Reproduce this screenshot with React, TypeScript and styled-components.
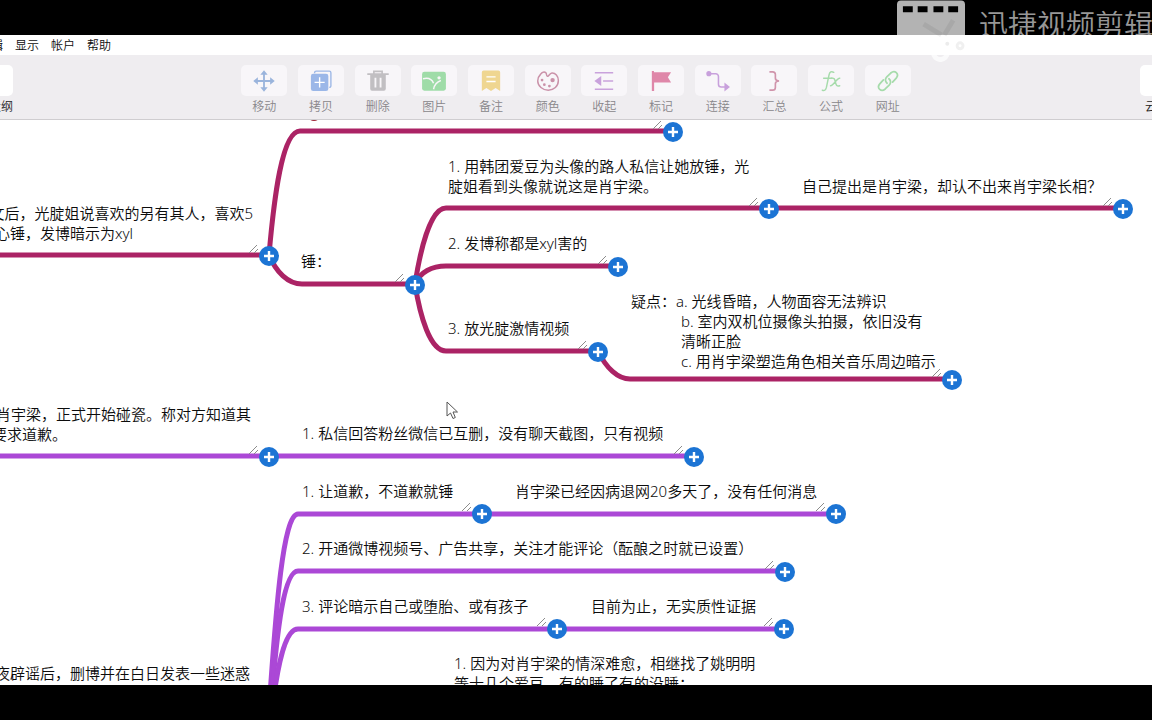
import React from "react";
import styled, { createGlobalStyle } from "styled-components";

const Global = createGlobalStyle`
  * { box-sizing: border-box; }
  body { margin: 0; background: #000; }
  button { font: inherit; border: 0; padding: 0; background: none; color: inherit; cursor: pointer; }
`;

const Page = styled.div`
  position: relative;
  display: flex;
  flex-direction: column;
  height: 100vh;
  padding: 35px 0;
  overflow: hidden;
  background: #000;
  color: #0c0c0c;
  font-family: "Noto Sans", "Noto Sans CJK SC", sans-serif;
  font-weight: 350;
`;

const MenuBar = styled.nav`
  display: flex;
  flex: none;
  gap: 12px;
  height: 20px;
  background: #fff;
  font-size: 12px;
`;

const MenuItem = styled.button`
  flex: none;
  line-height: 22px;

  &:first-child {
    margin-left: -21px;
  }
`;

const ToolBar = styled.header`
  display: grid;
  grid-template-columns: 1fr 680px 1fr;
  flex: none;
  height: 65px;
  padding-top: 10px;
  background: #efedf0;
  border-bottom: 1px solid #cfcdd0;
`;

const ToolGroup = styled.div<{ $side?: "left" | "right" }>`
  display: flex;
  justify-content: ${(p) => (p.$side === "right" ? "flex-end" : "flex-start")};
  margin-left: ${(p) => (p.$side === "left" ? "-33px" : "0")};
  margin-right: ${(p) => (p.$side === "right" ? "-34px" : "0")};
`;

const Tool = styled.button<{ $fill?: boolean; $active?: boolean; $align?: string }>`
  display: flex;
  flex: ${(p) => (p.$fill ? "1 1 0" : "none")};
  flex-direction: column;
  align-items: ${(p) => p.$align ?? "center"};
  height: 54px;
  color: ${(p) => (p.$active ? "#222" : "#88868a")};
  font-size: 12px;
  line-height: 22px;
`;

const ToolFace = styled.span<{ $active?: boolean }>`
  display: flex;
  flex: none;
  align-items: center;
  justify-content: center;
  width: 46px;
  height: 31px;
  border-radius: 5px;
  background: ${(p) => (p.$active ? "#fff" : "#f8f6f9")};
`;

const ToolLabel = styled.span<{ $inset?: boolean }>`
  padding-left: ${(p) => (p.$inset ? "5px" : "0")};
`;

const Canvas = styled.main`
  position: relative;
  flex: 1;
  overflow: hidden;
  background: #fff;
`;

const Links = styled.svg`
  position: absolute;
  top: 0;
  left: 0;
  overflow: visible;
`;

const Topic = styled.div<{ $x: number; $y: number; $fromRight?: boolean }>`
  position: absolute;
  top: ${(p) => p.$y}px;
  left: ${(p) => p.$x}px;
  transform: ${(p) => (p.$fromRight ? "translateX(-100%)" : "none")};
  font-size: 15px;
  line-height: 20px;
  white-space: pre;
`;

const AddButton = styled.button<{ $x: number; $y: number }>`
  position: absolute;
  top: ${(p) => p.$y - 10}px;
  left: ${(p) => p.$x - 10}px;
  width: 20px;
  height: 20px;
  border-radius: 50%;
  background: #1c74d4;
`;

const Pointer = styled.svg`
  position: absolute;
  top: 281px;
  left: 446px;
`;

const Watermark = styled.div`
  position: absolute;
  top: 0;
  right: -1px;
  display: flex;
  width: 256px;
  gap: 13px;
  overflow: hidden;
  color: rgba(255, 255, 255, 0.6);
  font-size: 29px;
  line-height: 50px;
  white-space: nowrap;
  pointer-events: none;
`;

const icons: Record<string, React.ReactNode> = {
  移动: (
    <g fill="#9ab4dc" stroke="#9ab4dc" strokeWidth="2">
      <path d="M12 3v18M3 12h18" />
      <path stroke="none" d="M12 .3l4 5H8zM12 23.700l4-5H8zM.3 12l5-4v8zM23.700 12l-5-4v8z" />
    </g>
  ),
  拷贝: (
    <g fill="none">
      <path d="M5 3.500V3a1.800 1.800 0 0 1 1.800-1.800H21A1.800 1.800 0 0 1 22.800 3v14.500A1.800 1.800 0 0 1 21 19" stroke="#9db8e6" strokeWidth="1.500" />
      <rect x="1" y="4" width="19" height="19" rx="2.500" fill="#9bb7e8" />
      <path d="M10.500 8v11M5 13.500H16" stroke="#fff" strokeWidth="1.500" />
    </g>
  ),
  删除: (
    <g fill="none" stroke="#c1bfc2" strokeWidth="1.800">
      <path d="M.3 4.500h23.400M7.500 4V1.500h9V4" />
      <path d="M3.500 5h17v15.500a2 2 0 0 1-2 2h-13a2 2 0 0 1-2-2z" fill="#c1bfc2" stroke="none" />
      <path d="M9.200 8.500v10.500M14.800 8.500v10.500" stroke="#f8f6f9" strokeWidth="2" />
    </g>
  ),
  图片: (
    <g fill="none">
      <rect x="-1" y="2" width="26" height="20.500" rx="2.500" fill="#9fdca8" />
      <path d="M0 9.500c6-1.500 10 1 11.500 5M11.500 21c1-5 3.500-8 8-9.500" stroke="#f8f6f9" strokeWidth="1.600" />
      <circle cx="17.500" cy="8.500" r="1.800" fill="#f8f6f9" />
    </g>
  ),
  备注: (
    <g>
      <path d="M2 2.500a2 2 0 0 1 2-2h16a2 2 0 0 1 2 2V23l-5-3.500-5 3.500-5-3.500L2 23z" fill="#efd691" />
      <path d="M7 7.500h10M7 12.500h10" stroke="#fff" strokeWidth="1.600" />
    </g>
  ),
  颜色: (
    <g fill="none" stroke="#ca92a9" strokeWidth="1.600">
      <path d="M4 4.500C5.500 2.500 8 1.700 9.500 2.800c1.500 1.200.2 3.400 1.800 4 1.700.6 2.200-3.300 5-3.500 3.700-.2 7 3.500 7 8.200 0 6.200-5 10.500-11 10.500S.8 17.500.8 12c0-3 1.200-5.500 3.200-7.500z" />
      <g fill="#ca92a9" stroke="none">
        <circle cx="5.500" cy="11" r="1.500" />
        <circle cx="8" cy="16" r="1.500" />
        <circle cx="13.500" cy="17.500" r="1.500" />
        <circle cx="17" cy="11" r="2.400" />
      </g>
    </g>
  ),
  收起: (
    <g stroke="#c9a2dc" strokeWidth="1.600">
      <path d="M2 3h20M11 12h11M2 21h20" />
      <path d="M9 6.500v11L1.500 12z" fill="#c9a2dc" stroke="none" />
    </g>
  ),
  标记: <path d="M2 1h2.300v1.500H23L19.500 8 23 13.500H4.500V23H2z" fill="#df87a9" />,
  连接: (
    <g fill="none" stroke="#c8a0dc" strokeWidth="1.700">
      <path d="M2 4h7.500a3 3 0 0 1 3 3v8.500a3 3 0 0 0 3 3H20" />
      <circle cx="2" cy="4" r="2.800" fill="#c8a0dc" stroke="none" />
      <path d="M19 13.500l6 5-6 5z" fill="#c8a0dc" stroke="none" />
    </g>
  ),
  汇总: (
    <path d="M7 2h3.500a3 3 0 0 1 3 3v4c0 1.800 1 2.800 4 3-3 .2-4 1.200-4 3v4a3 3 0 0 1-3 3H7" fill="none" stroke="#d094ab" strokeWidth="1.800" />
  ),
  公式: (
    <g fill="none" stroke="#a6dbab" strokeWidth="1.600" strokeLinecap="round">
      <path d="M15 2.500c-2.500-1.500-4.500-.5-5.200 3L7 19c-.7 3-2.500 4.200-4.500 3M4 9h9" />
      <path d="M12.500 9c3-.7 3.500 1 4.300 4.200.8 3.300 1.700 5 4.700 4M21.500 9c-3-.5-7 8.500-10 8.200" />
    </g>
  ),
  网址: (
    <g fill="none" stroke="#a6dbab" strokeWidth="1.900" strokeLinecap="round">
      <path d="M11 14.500c-2.500-2-2.200-5-.3-6.900l4.300-4.300c4.500-4 9.700 1 6 5.600l-4 4.300" />
      <path d="M13 9.500c2.500 2 2.200 5 .3 6.900l-4.300 4.300c-4.500 4-9.700-1-6-5.600l4-4.300" />
    </g>
  ),
};

type TopicData = { x: number; y: number; text: string; fromRight?: boolean };

const topics: TopicData[] = [
  { x: 253, y: 83, fromRight: true, text: "文后，光腚姐说喜欢的另有其人，喜欢5" },
  { x: 133, y: 103, fromRight: true, text: "心锤，发博暗示为xyl" },
  { x: 301, y: 131, text: "锤：" },
  { x: 448, y: 36, text: "1. 用韩团爱豆为头像的路人私信让她放锤，光\n腚姐看到头像就说这是肖宇梁。" },
  { x: 802, y: 56, text: "自己提出是肖宇梁，却认不出来肖宇梁长相？" },
  { x: 448, y: 113, text: "2. 发博称都是xyl害的" },
  { x: 448, y: 198, text: "3. 放光腚激情视频" },
  { x: 631, y: 171, text: "疑点：a. 光线昏暗，人物面容无法辨识" },
  { x: 681, y: 191, text: "b. 室内双机位摄像头拍摄，依旧没有\n清晰正脸\nc. 用肖宇梁塑造角色相关音乐周边暗示" },
  { x: 251, y: 284, fromRight: true, text: "肖宇梁，正式开始碰瓷。称对方知道其" },
  { x: 67, y: 304, fromRight: true, text: "要求道歉。" },
  { x: 302, y: 303, text: "1. 私信回答粉丝微信已互删，没有聊天截图，只有视频" },
  { x: 302, y: 361, text: "1. 让道歉，不道歉就锤" },
  { x: 515, y: 361, text: "肖宇梁已经因病退网20多天了，没有任何消息" },
  { x: 302, y: 418, text: "2. 开通微博视频号、广告共享，关注才能评论（酝酿之时就已设置）" },
  { x: 302, y: 476, text: "3. 评论暗示自己或堕胎、或有孩子" },
  { x: 591, y: 476, text: "目前为止，无实质性证据" },
  { x: 250, y: 543, fromRight: true, text: "夜辟谣后，删博并在白日发表一些迷惑" },
  { x: 454, y: 533, text: "1. 因为对肖宇梁的情深难愈，相继找了姚明明\n等十几个爱豆，有的睡了有的没睡；" },
];

const crimsonLinks = [
  "M0 135H269",
  "M269 135C274 78 282 11 300 11H673",
  "M269 135C276 152 288 164 302 164H415",
  "M415 164C420 132 430 88 446 88H1123",
  "M415 164C420 152 432 146 446 146H618",
  "M415 164C420 196 430 231 446 231H598",
  "M598 231C606 248 618 259 630 259H952",
];

const violetLinks = [
  "M0 336H694",
  "M270 575C276 490 283 394 298 394H836",
  "M272 575C277 510 284 451 298 451H785",
  "M274 575C279 540 286 509 298 509H784",
];

const addPoints: [number, number][] = [
  [673, 12], [269, 136], [415, 165], [769, 89], [1123, 89], [618, 147], [598, 232],
  [952, 260], [269, 337], [694, 337], [482, 394], [836, 394], [785, 452], [557, 509], [784, 509],
];

function ToolIcon({ name }: { name: string }) {
  return (
    <svg width="22" height="22" viewBox="0 0 24 24" overflow="visible" aria-hidden="true">
      {icons[name]}
    </svg>
  );
}

export default function App() {
  return (
    <Page>
      <Global />
      <MenuBar>
        {["编辑", "显示", "帐户", "帮助"].map((item) => (
          <MenuItem key={item}>{item}</MenuItem>
        ))}
      </MenuBar>
      <ToolBar>
        <ToolGroup $side="left">
          <Tool $active $align="flex-end">
            <ToolFace $active />
            <ToolLabel>大纲</ToolLabel>
          </Tool>
        </ToolGroup>
        <ToolGroup>
          {Object.keys(icons).map((name) => (
            <Tool key={name} $fill>
              <ToolFace>
                <ToolIcon name={name} />
              </ToolFace>
              <ToolLabel>{name}</ToolLabel>
            </Tool>
          ))}
        </ToolGroup>
        <ToolGroup $side="right">
          <Tool $active $align="flex-start">
            <ToolFace $active />
            <ToolLabel $inset>云</ToolLabel>
          </Tool>
        </ToolGroup>
      </ToolBar>
      <Canvas>
        <Links width="1152" height="565" fill="none" strokeWidth="5" aria-hidden="true">
          <ellipse cx="314" cy="-2" rx="5" ry="3" fill="#9c2436" />
          {violetLinks.map((d) => (
            <path key={d} d={d} stroke="#ab48d6" />
          ))}
          {crimsonLinks.map((d) => (
            <path key={d} d={d} stroke="#ab2365" />
          ))}
          {addPoints.map(([x, y]) => (
            <path key={`${x}-${y}`} d={`M${x - 20} ${y - 3}l8 -8M${x - 15} ${y - 3}l4 -4`} stroke="#8c8c8c" strokeWidth="1" />
          ))}
        </Links>
        {topics.map((t) => (
          <Topic key={t.text} $x={t.x} $y={t.y} $fromRight={t.fromRight}>
            {t.text}
          </Topic>
        ))}
        {addPoints.map(([x, y]) => (
          <AddButton key={`${x}-${y}`} $x={x} $y={y} aria-label="添加">
            <svg width="20" height="20" viewBox="0 0 20 20" display="block" aria-hidden="true">
              <path d="M10 5v10M5 10h10" stroke="#fff" strokeWidth="2.400" />
            </svg>
          </AddButton>
        ))}
        <Pointer width="13" height="19" viewBox="0 0 13 19" aria-hidden="true">
          <path d="M1 1v14l3.500-3 2.500 5.500 2.300-1L7 11h4.500z" fill="#fff" stroke="#555" />
        </Pointer>
      </Canvas>
      <Watermark>
        <svg width="70" height="62" viewBox="0 0 70 62" aria-hidden="true">
          <path
            fill="#fff"
            fillOpacity=".7"
            fillRule="evenodd"
            d="M4 0h61a4 4 0 0 1 4 4v48H0V4a4 4 0 0 1 4-4zM6 6v6h10V6zM21 6v6h10V6zM37 6v6h10V6zM52 6v6h10V6z"
          />
          <path d="M27 24l18 11M57 20L48 35" fill="none" stroke="#000" strokeOpacity=".06" strokeWidth="5" />
          <g fill="none" stroke="#fff" strokeOpacity=".7">
            <circle cx="44" cy="53" r="7" strokeWidth="5" />
          </g>
          <circle cx="64" cy="46" r="3" fill="none" stroke="#f0f0f0" strokeWidth="3" />
          <circle cx="51" cy="44" r="2" fill="#ececec" />
        </svg>
        <span>迅捷视频剪辑</span>
      </Watermark>
    </Page>
  );
}
